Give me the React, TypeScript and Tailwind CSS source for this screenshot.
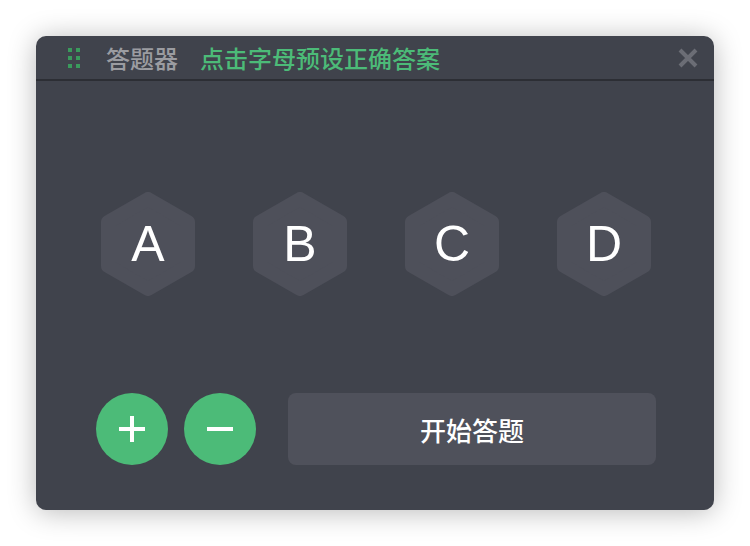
import React from "react";

const cjk = { fontFamily: '"Noto Sans CJK SC", "Noto Sans", sans-serif' };

function Hexagon({ letter }: { letter: string }) {
  return (
    <div className="relative w-[94px] h-[104px] flex items-center justify-center">
      <svg className="absolute inset-0" width="94" height="104" viewBox="0 0 94 104">
        <polygon
          points="47,7 87,30 87,74 47,97 7,74 7,30"
          fill="#4e505a"
          stroke="#4e505a"
          strokeWidth="14"
          strokeLinejoin="round"
        />
      </svg>
      <span
        className="relative text-white text-[50px] leading-none"
        style={{ fontFamily: '"Liberation Sans", Arial, sans-serif' }}
      >
        {letter}
      </span>
    </div>
  );
}

export default function App() {
  return (
    <div className="bg-white w-[750px] h-[546px] p-[36px]">
      <div className="w-[678px] h-[474px] rounded-[10px] bg-[#40434c] shadow-[0_2px_28px_rgba(0,0,0,0.28)] flex flex-col">
        {/* header */}
        <div className="h-[45px] border-b-2 border-[#2c2e34] flex items-center pl-[32px] pr-[16px] shrink-0">
          <div className="grid grid-cols-2 gap-[4px] w-[12px]">
            {[0, 1, 2, 3, 4, 5].map((i) => (
              <span key={i} className="w-[4px] h-[4px] bg-[#3a9a5c]" />
            ))}
          </div>
          <span className="ml-[26px] text-[24px] leading-none text-[#9b9ca1] font-medium" style={cjk}>
            答题器
          </span>
          <span className="ml-[22px] text-[24px] leading-none text-[#4cbb78] font-medium" style={cjk}>
            点击字母预设正确答案
          </span>
          <svg className="ml-auto" width="20" height="20" viewBox="0 0 20 20">
            <path d="M2 2 L18 18 M18 2 L2 18" stroke="#6b6d75" strokeWidth="4" strokeLinecap="butt" />
          </svg>
        </div>

        {/* letters */}
        <div className="flex pl-[65px] gap-[58px] mt-[111px]">
          {["A", "B", "C", "D"].map((l) => (
            <Hexagon key={l} letter={l} />
          ))}
        </div>

        {/* controls */}
        <div className="flex items-center pl-[60px] mt-[97px]">
          <button className="w-[72px] h-[72px] rounded-full bg-[#4cbb78] flex items-center justify-center">
            <svg width="26" height="26" viewBox="0 0 26 26">
              <path d="M0 13 H26 M13 0 V26" stroke="#fff" strokeWidth="4" />
            </svg>
          </button>
          <button className="ml-[16px] w-[72px] h-[72px] rounded-full bg-[#4cbb78] flex items-center justify-center">
            <svg width="26" height="26" viewBox="0 0 26 26">
              <path d="M0 13 H26" stroke="#fff" strokeWidth="4" />
            </svg>
          </button>
          <button
            className="ml-[32px] w-[368px] h-[72px] rounded-[8px] bg-[#4f515b] text-white text-[26px] font-medium flex items-center justify-center"
            style={cjk}
          >
            开始答题
          </button>
        </div>
      </div>
    </div>
  );
}
